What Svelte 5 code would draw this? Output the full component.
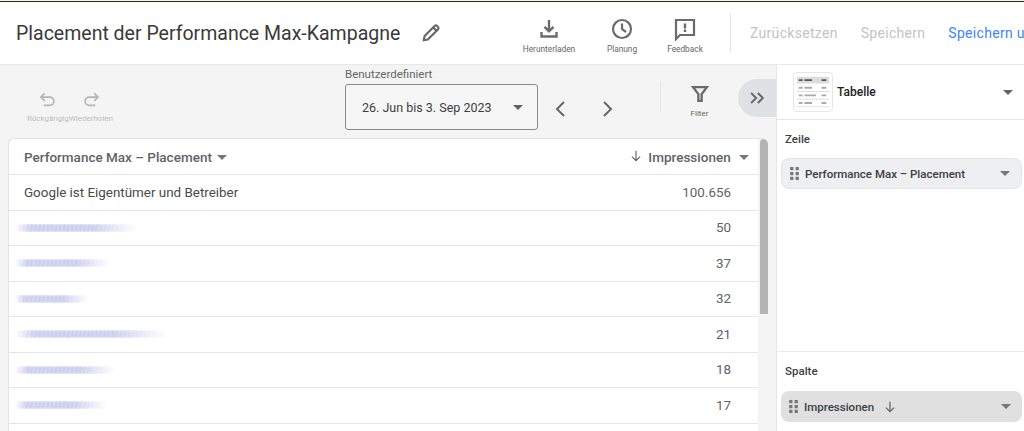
<script>
  const rows = [
    { label: "Google ist Eigentümer und Betreiber", value: "100.656" },
    { blur: 122, value: "50" },
    { blur: 95, value: "37" },
    { blur: 74, value: "32" },
    { blur: 152, value: "21" },
    { blur: 100, value: "18" },
    { blur: 92, value: "17" },
    { blur: 110, value: "" }
  ];
</script>

<div class="page">
  <div class="strip"></div>
  <header>
    <h1>Placement der Performance Max-Kampagne</h1>
    <svg class="pencil" viewBox="0 0 24 24"><path d="M4 20l1-4.600L16.200 4.200a1.600 1.600 0 0 1 2.200 0l1.400 1.400a1.600 1.600 0 0 1 0 2.200L8.600 19zM14.500 6l3.500 3.500" fill="none" stroke="#666" stroke-width="2.300" stroke-linejoin="round"/></svg>
    <div class="tool dl">
      <svg viewBox="0 0 24 24"><path d="M12 3v11M7.500 9.800 12 14.300l4.500-4.500M4.500 15v4.500h15V15" fill="none" stroke="#6b6b6b" stroke-width="2.400"/></svg>
      <span>Herunterladen</span>
    </div>
    <div class="tool plan">
      <svg viewBox="0 0 24 24"><circle cx="12" cy="12" r="9" fill="none" stroke="#6b6b6b" stroke-width="2.200"/><path d="M12 6.500V12l4 3" fill="none" stroke="#6b6b6b" stroke-width="2.200"/></svg>
      <span>Planung</span>
    </div>
    <div class="tool fb">
      <svg viewBox="0 0 24 24"><path d="M3 3h18v15H7l-4 4z" fill="none" stroke="#6b6b6b" stroke-width="2.200"/><path d="M12 6.500v5M12 12.500v2.500" stroke="#6b6b6b" stroke-width="2.400"/></svg>
      <span>Feedback</span>
    </div>
    <div class="vline"></div>
    <span class="act reset">Zurücksetzen</span>
    <span class="act save">Speichern</span>
    <span class="act blue">Speichern und teilen</span>
  </header>

  <div class="body">
    <main>
      <div class="toolbar">
        <div class="undo">
          <div class="mini">
            <svg viewBox="0 0 24 24"><path d="M8 4 3.500 8.500 8 13M4 8.500h10a5 5 0 0 1 0 10H7" fill="none" stroke="#b5b5b5" stroke-width="2"/></svg>
            <span>Rückgängig</span>
          </div>
          <div class="mini">
            <svg viewBox="0 0 24 24"><path d="M16 4l4.500 4.500L16 13M20 8.500H10a5 5 0 0 0 0 10h7" fill="none" stroke="#b5b5b5" stroke-width="2"/></svg>
            <span>Wiederholen</span>
          </div>
        </div>
        <div class="range">
          <label for="range-box">Benutzerdefiniert</label>
          <div class="datebox" id="range-box">
            <span>26. Jun bis 3. Sep 2023</span>
            <i class="caret"></i>
          </div>
        </div>
        <svg class="chev first" viewBox="0 0 24 24"><path d="M15 5l-7 7 7 7" fill="none" stroke="#666" stroke-width="2"/></svg>
        <svg class="chev" viewBox="0 0 24 24"><path d="M9 5l7 7-7 7" fill="none" stroke="#666" stroke-width="2"/></svg>
        <div class="vline short"></div>
        <div class="filter">
          <svg viewBox="0 0 24 24"><path d="M4.500 4.500h15l-5.700 7.600V19.500h-3.600v-7.400z" fill="none" stroke="#6b6b6b" stroke-width="2.600"/></svg>
          <span>Filter</span>
        </div>
        <div class="collapse">
          <svg viewBox="0 0 24 24"><path d="M5 6l6 6-6 6M13 6l6 6-6 6" fill="none" stroke="#666" stroke-width="2.200"/></svg>
        </div>
      </div>

      <div class="card">
        <div class="grid">
          <div class="row head">
            <span class="col">Performance Max – Placement <i class="caret small"></i></span>
            <span class="col num">
              <svg viewBox="0 0 24 24"><path d="M12 3v17M5 13l7 7 7-7" fill="none" stroke="#666" stroke-width="2"/></svg>
              Impressionen <i class="caret small"></i>
            </span>
          </div>
          {#each rows as row}
            <div class="row">
              {#if row.label}
                <span>{row.label}</span>
              {:else}
                <span class="smear" style="width: {row.blur}px"></span>
              {/if}
              <span class="val">{row.value}</span>
            </div>
          {/each}
        </div>
        <div class="track"><div class="thumb"></div></div>
      </div>
    </main>

    <aside>
      <div class="chart">
        <div class="thumbnail">
          <svg viewBox="0 0 40 40">
            <rect x="3" y="4" width="34" height="7" fill="#dcdcdc"/>
            <path d="M5 7.500h4M11 7.500h8M29 7.500h5" stroke="#555" stroke-width="2"/>
            <path d="M5 15.500h4M11 15.500h8M29 15.500h5M5 23.500h4M11 23.500h12M29 23.500h5M5 31.500h4M11 31.500h8M29 31.500h5" stroke="#aaa" stroke-width="2"/>
            <path d="M3 19.500h34M3 27.500h34M3 35.500h34" stroke="#ddd"/>
          </svg>
        </div>
        <span class="name">Tabelle</span>
        <i class="caret"></i>
      </div>
      <section class="zeile">
        <h2>Zeile</h2>
        <div class="chip light">
          <svg class="grip" viewBox="0 0 8 12"><path d="M0 0h3v3H0zM5 0h3v3H5zM0 4.500h3v3H0zM5 4.500h3v3H5zM0 9h3v3H0zM5 9h3v3H5z" fill="#777"/></svg>
          <span>Performance Max – Placement</span>
          <i class="caret small"></i>
        </div>
      </section>
      <section>
        <h2>Spalte</h2>
        <div class="chip">
          <svg class="grip" viewBox="0 0 8 12"><path d="M0 0h3v3H0zM5 0h3v3H5zM0 4.500h3v3H0zM5 4.500h3v3H5zM0 9h3v3H0zM5 9h3v3H5z" fill="#777"/></svg>
          <span>Impressionen</span>
          <svg class="down" viewBox="0 0 24 24"><path d="M12 3v17M5 13l7 7 7-7" fill="none" stroke="#666" stroke-width="2.200"/></svg>
          <i class="caret small"></i>
        </div>
      </section>
    </aside>
  </div>
</div>

<style>
  :global(body) {
    background: #fff;
    overflow: hidden;
  }
  .page {
    width: 1024px;
    height: 431px;
    overflow: hidden;
    font-family: Roboto, "Liberation Sans", sans-serif;
    color: #3c4043;
  }
  .strip {
    height: 1px;
    background: #fdf3d8;
    border-bottom: 1px solid #2b2b2b;
  }

  header {
    height: 62px;
    display: flex;
    align-items: center;
    white-space: nowrap;
    border-bottom: 1px solid #e8e8e8;
    overflow: hidden;
  }
  header > * {
    flex: none;
  }
  h1 {
    margin: 0 0 0 16px;
    width: 384px;
    font-size: 19.500px;
    font-weight: 400;
    color: #3a3a3a;
  }
  .pencil {
    width: 22px;
    height: 22px;
    margin-left: 20px;
  }
  .tool {
    display: flex;
    flex-direction: column;
    align-items: center;
    gap: 3px;
    font-size: 8.300px;
    color: #666;
    width: 60px;
    margin-top: 5px;
  }
  .tool svg {
    width: 24px;
    height: 24px;
  }
  .dl {
    margin-left: 77px;
  }
  .plan {
    margin-left: 13px;
  }
  .fb {
    margin-left: 3px;
  }
  .vline {
    width: 1px;
    height: 38px;
    background: #e4e4e4;
    margin-left: 15px;
  }
  .act {
    font-size: 14px;
    font-weight: 400;
    letter-spacing: 0.300px;
    color: #c4c4c4;
  }
  .reset {
    margin-left: 19px;
  }
  .save {
    margin-left: 23px;
  }
  .blue {
    margin-left: 23px;
    color: #4285f4;
  }

  .body {
    display: flex;
    height: 368px;
  }
  main {
    width: 776px;
    background: #f4f4f4;
    flex: none;
    display: flex;
    flex-direction: column;
  }
  .toolbar {
    height: 73px;
    display: flex;
    align-items: flex-start;
    flex: none;
  }
  .undo {
    display: flex;
    margin: 25px 0 0 27px;
    width: 318px;
    flex: none;
  }
  .mini {
    display: flex;
    flex-direction: column;
    align-items: center;
    font-size: 8px;
    color: #bdbdbd;
    gap: 4px;
    white-space: nowrap;
  }
  .mini svg {
    width: 20px;
    height: 20px;
  }
  .range {
    display: flex;
    flex-direction: column;
    width: 193px;
    padding-top: 2px;
    flex: none;
  }
  .range label {
    font-size: 11.500px;
    color: #666;
    height: 17px;
  }
  .datebox {
    height: 44px;
    border: 1px solid #8a8a8a;
    border-radius: 3px;
    display: flex;
    align-items: center;
    justify-content: space-between;
    padding: 0 14px 0 16px;
    font-size: 12.500px;
    color: #3c4043;
    background: #f6f6f6;
  }
  .caret {
    display: block;
    width: 0;
    height: 0;
    border: 5px solid transparent;
    border-top-color: #5f6368;
    border-bottom: 0;
    flex: none;
  }
  .caret.small {
    display: inline-block;
    border-width: 5.500px;
    border-bottom: 0;
    border-top-color: #777;
    vertical-align: 2px;
    margin-left: 3px;
  }
  .chev {
    width: 24px;
    height: 24px;
    margin: 32px 0 0 22px;
    flex: none;
  }
  .chev.first {
    margin-left: 11px;
  }
  .vline.short {
    height: 30px;
    margin: 17px 0 0 41px;
    flex: none;
  }
  .filter {
    width: 77px;
    display: flex;
    flex-direction: column;
    align-items: center;
    font-size: 8px;
    color: #666;
    margin-top: 18px;
    gap: 4px;
    flex: none;
  }
  .filter svg {
    width: 22px;
    height: 22px;
  }
  .collapse {
    flex: 1;
    height: 38px;
    margin-top: 14px;
    background: #dfe1e5;
    border-radius: 19px 0 0 19px;
    display: flex;
    align-items: center;
    padding-left: 9px;
  }
  .collapse svg {
    width: 20px;
    height: 20px;
  }

  .card {
    margin-left: 8px;
    width: 760px;
    height: 300px;
    display: flex;
    background: #fff;
    border-radius: 6px 6px 0 0;
    border: 1px solid #e4e4e4;
    border-bottom: 0;
    border-right: 0;
    box-sizing: border-box;
    overflow: hidden;
    flex: none;
  }
  .grid {
    flex: 1;
  }
  .row {
    height: 35.500px;
    box-sizing: border-box;
    display: flex;
    align-items: center;
    justify-content: space-between;
    padding: 0 27px 0 15px;
    border-bottom: 1px solid #e6e6e6;
    font-size: 13.400px;
    color: #4a4a4a;
  }
  .row.head {
    height: 36px;
    padding-right: 9px;
    font-size: 13.500px;
    font-weight: 500;
    color: #5f6368;
  }
  .col .caret {
    margin-left: 2px;
  }
  .col.num .caret {
    margin-left: 5px;
  }
  .col.num svg {
    width: 14px;
    height: 14px;
    margin-right: 2px;
    vertical-align: -1px;
  }
  .val {
    color: #5f6368;
  }
  .smear {
    height: 8px;
    margin-left: -9px;
    background: repeating-linear-gradient(100deg, #aab0e2 0 2px, #e6e8f8 2px 4px);
    filter: blur(0.800px);
    opacity: 0.85;
    mask-image: linear-gradient(90deg, transparent, #000 12%, #000 65%, transparent);
  }
  .track {
    width: 10px;
    background: #f4f4f4;
    flex: none;
  }
  .thumb {
    height: 175px;
    margin-left: 2px;
    background: #b4b4b4;
    border-radius: 4px 4px 0 0;
  }

  aside {
    flex: 1;
    border-left: 1px solid #e6e6e6;
    background: #fff;
    display: flex;
    flex-direction: column;
  }
  .chart {
    height: 55px;
    flex: none;
    display: flex;
    align-items: center;
    padding: 0 11px 0 16px;
    border-bottom: 1px solid #e6e6e6;
    box-sizing: border-box;
  }
  .thumbnail {
    width: 40px;
    height: 40px;
    border: 1px solid #e6e6e6;
    border-radius: 4px;
    box-sizing: border-box;
    flex: none;
  }
  .thumbnail svg {
    display: block;
    width: 100%;
    height: 100%;
  }
  .name {
    flex: 1;
    margin-left: 4px;
    font-size: 12px;
    font-weight: 500;
    color: #222;
  }
  section {
    padding: 0 2px 0 4px;
  }
  .zeile {
    height: 232px;
    box-sizing: border-box;
    border-bottom: 1px solid #eaeaea;
    flex: none;
  }
  h2 {
    margin: 0;
    padding: 12px 0 0 4px;
    height: 39px;
    box-sizing: border-box;
    font-size: 11.500px;
    font-weight: 500;
    color: #3c4043;
  }
  .zeile h2 {
    height: 38px;
  }
  .chip {
    height: 31px;
    border-radius: 8px;
    background: #e0e0e0;
    display: flex;
    align-items: center;
    padding: 0 11px 0 8px;
    font-size: 11.500px;
    font-weight: 500;
    color: #3c4043;
  }
  .chip.light {
    background: #eeeff0;
    border: 1px solid #e4e4e4;
    box-sizing: border-box;
  }
  .chip span {
    margin-left: 6px;
  }
  .chip .caret {
    margin-left: auto;
  }
  .grip {
    width: 9px;
    height: 13px;
    flex: none;
  }
  .down {
    width: 14px;
    height: 14px;
    margin-left: 9px;
  }
</style>
